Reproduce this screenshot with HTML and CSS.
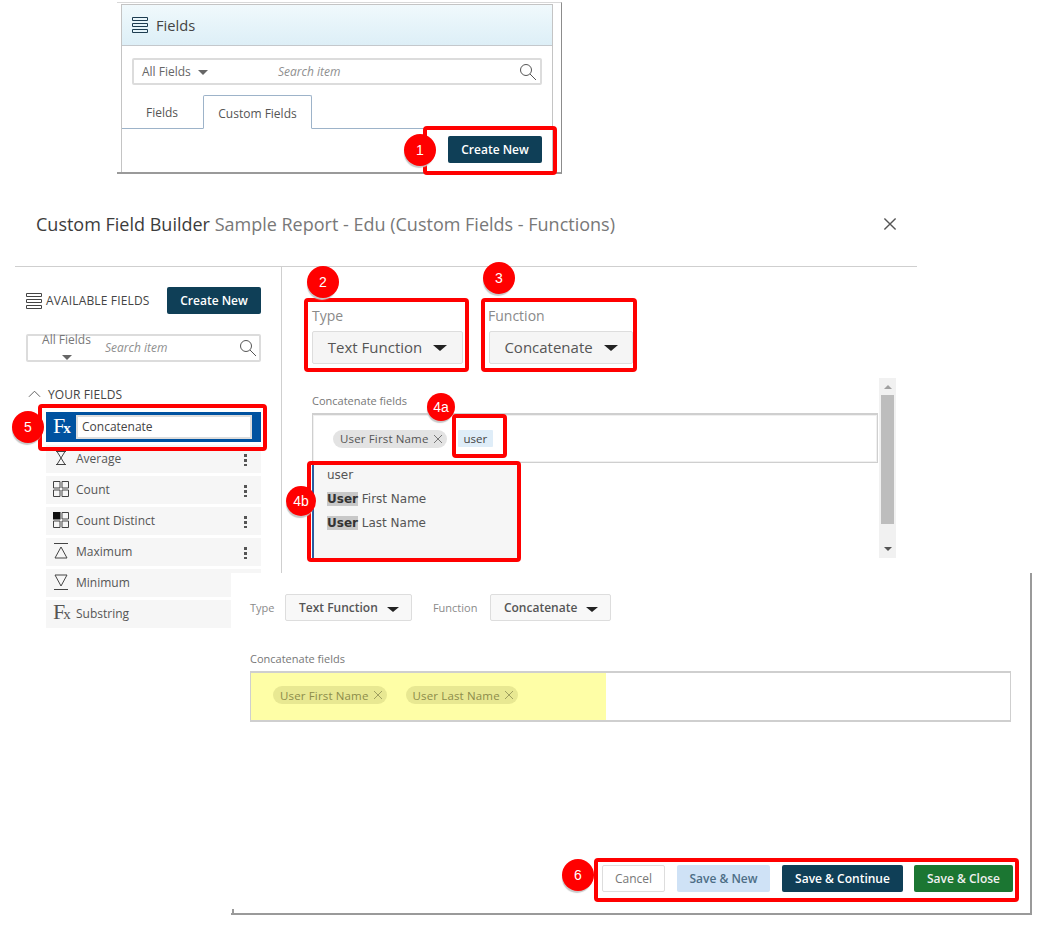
FILE: index.html
```html
<!DOCTYPE html>
<html lang="en">
<head>
<meta charset="utf-8">
<title>Custom Field Builder</title>
<link rel="stylesheet" href="styles.css">
</head>
<body>
<svg class="defs" width="0" height="0" aria-hidden="true">
  <symbol id="i-list" viewBox="0 0 16 16"><path d="M.5.5h15v3H.5zM.5 6.5h15v3H.5zM.5 12.5h15v3H.5z" fill="none" stroke="currentColor"/></symbol>
  <symbol id="i-search" viewBox="0 0 18 18"><circle cx="7" cy="7" r="5.500" fill="none" stroke="currentColor"/><path d="M11 11l6 6" stroke="currentColor" fill="none"/></symbol>
  <symbol id="i-x" viewBox="0 0 10 10"><path d="M1 1l8 8M9 1l-8 8" stroke="currentColor" fill="none"/></symbol>
</svg>

<section class="win fields-win">
  <div class="fields-panel">
    <header class="fields-head">
      <svg class="head-icon"><use href="#i-list"/></svg>
      <span>Fields</span>
    </header>
    <div class="search-row">
      <span class="all-fields">All Fields <i class="caret caret-grey"></i></span>
      <span class="search-hint">Search item</span>
      <svg class="search-icon"><use href="#i-search"/></svg>
    </div>
    <nav class="tabs">
      <span class="tab">Fields</span>
      <span class="tab tab-on">Custom Fields</span>
    </nav>
    <div class="create-row"><button class="btn btn-navy btn-create">Create New</button></div>
  </div>
</section>

<section class="win builder-win">
  <header class="builder-head">
    <h1 class="builder-title">Custom Field Builder <span>Sample Report - Edu (Custom Fields - Functions)</span></h1>
    <svg class="close-icon"><use href="#i-x"/></svg>
  </header>
  <div class="builder-body">
    <aside class="sidebar">
      <div class="side-top">
        <svg class="side-list"><use href="#i-list"/></svg>
        <span class="side-title">AVAILABLE FIELDS</span>
        <button class="btn btn-navy btn-side">Create New</button>
      </div>
      <div class="side-search">
        <span class="side-all">All Fields<i class="caret caret-grey"></i></span>
        <span class="search-hint">Search item</span>
        <svg class="search-icon"><use href="#i-search"/></svg>
      </div>
      <div class="your-fields">
        <svg class="chev" viewBox="0 0 14 8"><path d="M1 7l6-6 6 6" fill="none" stroke="currentColor"/></svg>
        <span>YOUR FIELDS</span>
      </div>
      <div class="field-active">
        <span class="fx fx-white">F<small>x</small></span>
        <span class="field-input">Concatenate</span>
      </div>
      <ul class="field-list">
        <li class="field">
          <svg class="field-icon" viewBox="0 0 16 16"><path d="M3 1.500h10M3 14.500h10M4 1.500l8 13M12 1.500l-8 13" fill="none" stroke="currentColor"/></svg>
          <span class="field-name">Average</span><i class="dots"></i>
        </li>
        <li class="field">
          <svg class="field-icon" viewBox="0 0 16 16"><path d="M.5.5h6.500v6.500H.5zM9 .5h6.500v6.500H9zM.5 9h6.500v6.500H.5zM9 9h6.500v6.500H9z" fill="none" stroke="currentColor"/></svg>
          <span class="field-name">Count</span><i class="dots"></i>
        </li>
        <li class="field">
          <svg class="field-icon" viewBox="0 0 16 16"><path d="M0 0h7.500v7.500H0z" fill="#111"/><path d="M9 .5h6.500v6.500H9zM.5 9h6.500v6.500H.5zM9 9h6.500v6.500H9z" fill="none" stroke="currentColor"/></svg>
          <span class="field-name">Count Distinct</span><i class="dots"></i>
        </li>
        <li class="field">
          <svg class="field-icon" viewBox="0 0 16 16"><path d="M1 .5h14M8 4l6 11H2z" fill="none" stroke="currentColor"/></svg>
          <span class="field-name">Maximum</span><i class="dots"></i>
        </li>
        <li class="field">
          <svg class="field-icon" viewBox="0 0 16 16"><path d="M1 15.500h14M8 12L2 1h12z" fill="none" stroke="currentColor"/></svg>
          <span class="field-name">Minimum</span>
        </li>
        <li class="field">
          <span class="fx">F<small>x</small></span>
          <span class="field-name">Substring</span>
        </li>
      </ul>
    </aside>
    <div class="main">
      <div class="selects">
        <div class="select-group select-type">
          <label class="select-label">Type</label>
          <div class="select-box">Text Function <i class="caret caret-big"></i></div>
        </div>
        <div class="select-group select-function">
          <label class="select-label">Function</label>
          <div class="select-box">Concatenate <i class="caret caret-big"></i></div>
        </div>
      </div>
      <div class="concat">
        <div class="concat-col">
          <label class="concat-label">Concatenate fields</label>
          <div class="concat-box">
            <span class="chip">User First Name <svg class="chip-x"><use href="#i-x"/></svg></span>
            <span class="typed">user</span>
          </div>
          <div class="suggest">
            <div class="suggest-row suggest-first">user</div>
            <div class="suggest-row"><b>User</b> First Name</div>
            <div class="suggest-row"><b>User</b> Last Name</div>
          </div>
        </div>
        <div class="scrollbar">
          <i class="sb-up"></i>
          <i class="sb-thumb"></i>
          <i class="sb-down"></i>
        </div>
      </div>
    </div>
  </div>
</section>

<section class="win final-win">
  <div class="final-selects">
    <label class="final-label">Type</label>
    <div class="final-box">Text Function <i class="caret caret-mid"></i></div>
    <label class="final-label final-label-fn">Function</label>
    <div class="final-box">Concatenate <i class="caret caret-mid"></i></div>
  </div>
  <label class="final-concat-label">Concatenate fields</label>
  <div class="final-concat">
    <div class="highlight">
      <span class="chip chip-hl">User First Name <svg class="chip-x"><use href="#i-x"/></svg></span>
      <span class="chip chip-hl">User Last Name <svg class="chip-x"><use href="#i-x"/></svg></span>
    </div>
  </div>
  <footer class="actions">
    <button class="btn btn-cancel">Cancel</button>
    <button class="btn btn-light">Save &amp; New</button>
    <button class="btn btn-navy btn-cont">Save &amp; Continue</button>
    <button class="btn btn-green">Save &amp; Close</button>
  </footer>
</section>

<i class="box box-1"></i>
<i class="box box-2"></i>
<i class="box box-3"></i>
<i class="box box-4a"></i>
<i class="box box-4b"></i>
<i class="box box-5"></i>
<i class="box box-6"></i>
<span class="marker m-1">1</span>
<span class="marker m-2">2</span>
<span class="marker m-3">3</span>
<span class="marker m-4a">4a</span>
<span class="marker m-4b">4b</span>
<span class="marker m-5">5</span>
<span class="marker m-6">6</span>
</body>
</html>
```
FILE: styles.css
```css
* { box-sizing: border-box; }
html, body { margin: 0; padding: 0; }
body {
  position: relative;
  width: 1043px;
  height: 927px;
  overflow: hidden;
  background: #fff;
  font-family: "Open Sans", "Noto Sans", sans-serif;
  color: #555;
}
.defs { position: absolute; }
i { display: block; font-style: normal; }
button { font-family: inherit; margin: 0; }

.win { position: absolute; }

/* shared */
.btn {
  border: 0;
  border-radius: 2px;
  font-size: 12px;
  font-weight: 600;
  padding: 0;
  display: block;
}
.btn-navy { background: #0f3f57; color: #fff; }
.caret {
  display: inline-block;
  width: 0; height: 0;
  border-style: solid;
  border-color: #222 transparent transparent;
}
.caret-grey { border-width: 5px 5px 0; border-top-color: #666; }
.caret-big { border-width: 6px 7px 0; margin-left: 7px; vertical-align: 2px; }
.caret-mid { border-width: 5px 6px 0; margin-left: 6px; vertical-align: 0; }
.search-hint { font-size: 12px; font-style: italic; color: #8f8f8f; }
.search-icon { width: 18px; height: 18px; color: #555; }

/* first window */
.fields-win {
  left: 117px; top: 2px; width: 445px; height: 172px;
  border-right: 1px solid #8c8c8c;
  border-bottom: 2px solid #9a9a9a;
  border-top: 1px solid #d8d8d8;
  padding: 1px 8px 0 4px;
}
.fields-panel {
  height: 100%;
  border-left: 1px solid #c4c4c4;
  border-right: 1px solid #c4c4c4;
  border-top: 1px solid #c4c4c4;
  display: flex;
  flex-direction: column;
}
.fields-head {
  height: 41px;
  flex: none;
  display: flex;
  align-items: center;
  gap: 8px;
  padding-left: 10px;
  background: linear-gradient(#f0f9fc, #ddeff7);
  border-bottom: 1px solid #c4c8cc;
  font-size: 14.700px;
  color: #444;
}
.head-icon { width: 16px; height: 16px; color: #1d3c50; }
.search-row {
  margin: 12px 10px 0 10px;
  height: 27px;
  flex: none;
  border: 2px solid #dcdcdc;
  border-radius: 2px;
  display: flex;
  align-items: center;
  padding: 0 3px 0 8px;
  font-size: 12px;
  color: #666;
}
.all-fields { width: 136px; }
.all-fields .caret { margin-left: 4px; vertical-align: 1px; }
.search-row .search-icon { margin-left: auto; }
.tabs {
  margin-top: 10px;
  height: 34px;
  flex: none;
  display: flex;
  border-bottom: 1px solid #9db3c9;
  font-size: 12px;
  color: #555;
}
.tab { padding: 9px 24px 0; width: 81px; }
.tab-on {
  width: 109px;
  padding: 9px 0 0;
  text-align: center;
  height: 34px;
  background: #fff;
  border: 1px solid #9db3c9;
  border-bottom: 1px solid #fff;
  border-radius: 2px 2px 0 0;
}
.create-row { display: flex; justify-content: flex-end; padding: 7px 10px 0 0; }
.btn-create { width: 94px; height: 27px; }

/* builder */
.builder-win { left: 15px; top: 196px; width: 902px; height: 440px; }
.builder-head {
  height: 71px;
  border-bottom: 1px solid #cfcfcf;
  display: flex;
  justify-content: space-between;
  padding: 16px 20px 0 21px;
}
.builder-title { margin: 0; font-size: 18px; font-weight: 400; color: #3c3c3c; line-height: 24px; }
.builder-title span { color: #787878; }
.close-icon { width: 14px; height: 14px; margin-top: 5px; color: #555; }
.builder-body { display: flex; height: 369px; }
.sidebar { width: 266px; flex: none; padding: 20px 0 0 11px; }
.side-top { display: flex; align-items: center; height: 27px; padding-right: 20px; }
.side-list { width: 16px; height: 16px; color: #444; flex: none; }
.side-title { font-size: 12px; margin-left: 4px; color: #444; flex: 1; white-space: nowrap; letter-spacing: .15px; }
.btn-side { width: 94px; height: 27px; flex: none; }
.side-search {
  margin-top: 20px;
  width: 235px;
  height: 28px;
  border: 2px solid #dcdcdc;
  border-radius: 2px;
  display: flex;
  align-items: center;
  padding-right: 2px;
}
.side-all {
  width: 77px;
  text-align: center;
  font-size: 12px;
  color: #777;
  line-height: 13px;
  margin-top: -4px;
  flex: none;
}
.side-all .caret { display: block; margin: 9px auto 0; }
.side-search .search-hint { margin-top: -2px; }
.side-search .search-icon { margin-left: auto; }
.your-fields {
  display: flex;
  align-items: center;
  gap: 7px;
  margin-top: 24px;
  padding-left: 2px;
  font-size: 12px;
  letter-spacing: .1px;
  color: #444;
  height: 16px;
}
.chev { width: 13px; height: 8px; color: #555; }
.field-active {
  margin: 10px 20px 0 20px;
  height: 30px;
  background: #0052a0;
  display: flex;
  align-items: center;
  padding: 0 9px 0 7px;
  gap: 7px;
}
.fx { font-family: "Liberation Serif", serif; font-size: 22px; line-height: 20px; color: #555; width: 16px; flex: none; letter-spacing: -2px; }
.fx small { font-size: 15px; font-weight: 400; }
.fx-white { color: #fff; }
.fx-white small { font-weight: 700; }
.field-input {
  flex: 1;
  height: 24px;
  background: #fff;
  border: 2px solid #ddd;
  padding-left: 4px;
  font-size: 12px;
  line-height: 20px;
  color: #444;
}
.field-list { list-style: none; margin: 3px 20px 0 20px; padding: 0; }
.field {
  height: 28px;
  margin-bottom: 3px;
  background: #f6f6f6;
  display: flex;
  align-items: center;
  padding: 0 14px 2px 7px;
  gap: 7px;
  font-size: 12px;
  color: #555;
}
.field-icon { width: 16px; height: 16px; color: #444; flex: none; }
.field-name { flex: 1; }
.dots {
  width: 3px; height: 13px;
  margin-top: 2px;
  background: radial-gradient(circle, #555 0 1.5px, transparent 1.6px) 0 0 / 3px 5px repeat-y;
}
.main {
  flex: 1;
  border-left: 1px solid #cfcfcf;
  padding: 39px 0 0 30px;
  height: 306px;
}
.selects { display: flex; gap: 26px; }
.select-group { display: flex; flex-direction: column; }
.select-type { width: 151px; }
.select-function { width: 144px; }
.select-label { font-size: 14px; line-height: 19px; color: #8a8a8a; margin-bottom: 6px; }
.select-function .select-label { margin-left: -1px; }
.select-box {
  height: 33px;
  background: #f5f5f5;
  border: 1px solid #ddd;
  border-radius: 2px;
  font-size: 15px;
  line-height: 30px;
  color: #555;
  text-align: center;
}
.concat { display: flex; margin-top: 14px; height: 180px; }
.concat-col { width: 567px; padding-top: 16px; }
.concat-label { display: block; font-size: 11px; line-height: 14px; color: #777; }
.concat-box {
  margin-top: 5px;
  width: 566px;
  height: 50px;
  border: 1px solid #cfcfcf;
  border-top-width: 2px;
  box-shadow: inset 0 0 0 1px #f0f0f0;
  display: flex;
  align-items: center;
  padding-left: 20px;
}
.chip {
  display: flex;
  align-items: center;
  gap: 4px;
  height: 18px;
  padding: 0 4px 0 7px;
  background: #e3e3e3;
  border-radius: 9px;
  font-size: 11.500px;
  color: #555;
  white-space: nowrap;
  letter-spacing: .15px;
}
.chip-x { width: 10px; height: 10px; color: #777; }
.typed {
  margin-left: 11px;
  background: #dfedf8;
  height: 17px;
  padding: 0 6px;
  font-size: 11.500px;
  line-height: 18px;
  color: #444;
  border-radius: 1px;
}
.suggest {
  width: 206px;
  height: 96px;
  background: #f6f6f6;
  border-left: 2px solid #2b5a9e;
  padding: 2px 0 0 13px;
  font-family: "DejaVu Sans", sans-serif;
  font-size: 12px;
  color: #555;
}
.suggest-row { height: 24px; line-height: 20px; }
.suggest-row b { background: #c8c8c8; color: #333; }
.scrollbar {
  width: 17px;
  height: 180px;
  background: #f1f1f1;
  display: flex;
  flex-direction: column;
  align-items: center;
  padding-top: 7px;
}
.sb-up { width: 0; height: 0; border: solid transparent; border-width: 0 4px 4px; border-bottom-color: #a0a0a0; }
.sb-thumb { width: 13px; height: 129px; margin-top: 6px; background: #bdbdbd; }
.sb-down { width: 0; height: 0; margin-top: 23px; border: solid transparent; border-width: 4px 4px 0; border-top-color: #555; }

/* final window */
.final-win {
  left: 231px; top: 573px; width: 801px; height: 342px;
  background: #fff;
  border-right: 2px solid #9a9a9a;
  border-bottom: 2px solid #9a9a9a;
  padding: 21px 0 0 19px;
}
.final-win::before {
  content: "";
  position: absolute;
  left: 1px; bottom: 0; width: 2px; height: 4px;
  background: #9a9a9a;
}
.final-selects { display: flex; align-items: center; height: 27px; }
.final-label { font-size: 11px; color: #8a8a8a; width: 35px; flex: none; }
.final-label-fn { width: 57px; margin-left: 21px; }
.final-box {
  height: 27px;
  padding: 0 12px 0 13px;
  border: 1px solid #ddd;
  border-radius: 2px;
  background: #f8f8f8;
  font-size: 12px;
  font-weight: 600;
  line-height: 25px;
  color: #555;
  white-space: nowrap;
}
.final-concat-label { display: block; margin-top: 31px; font-size: 11px; line-height: 14px; color: #777; }
.final-concat {
  margin-top: 5px;
  width: 761px;
  height: 51px;
  border: 1px solid #cfcfcf;
  border-top-width: 2px;
  border-bottom-width: 2px;
}
.highlight {
  width: 355px;
  height: 100%;
  background: #fefea6;
  display: flex;
  align-items: center;
  gap: 19px;
  padding-left: 22px;
  padding-bottom: 3px;
}
.chip-hl { background: #e8e892; color: #8c8c4a; }
.chip-hl .chip-x { color: #a0a060; }
.actions {
  display: flex;
  align-items: center;
  margin: 143px 0 0 352px;
  height: 27px;
}
.actions .btn { height: 27px; }
.btn-cancel { width: 63px; background: #fff; border: 1px solid #ddd; color: #777; font-weight: 400; }
.btn-light { width: 93px; margin-left: 12px; background: #cfe2f6; color: #4d6e86; }
.btn-cont { width: 121px; margin-left: 12px; }
.btn-green { width: 99px; margin-left: 11px; background: #1b7632; color: #f0f0f0; }

/* annotations */
.box {
  position: absolute;
  border: 4px solid #f00;
  border-radius: 4px;
  pointer-events: none;
}
.box-1 { left: 423px; top: 126px; width: 134px; height: 49px; }
.box-2 { left: 304px; top: 298px; width: 165px; height: 74px; }
.box-3 { left: 481px; top: 298px; width: 156px; height: 74px; }
.box-4a { left: 452px; top: 414px; width: 55px; height: 44px; }
.box-4b { left: 307px; top: 461px; width: 214px; height: 101px; }
.box-5 { left: 38px; top: 404px; width: 229px; height: 47px; }
.box-6 { left: 594px; top: 858px; width: 425px; height: 44px; }
.marker {
  position: absolute;
  width: 32px; height: 32px;
  border-radius: 50%;
  background: #f00;
  color: #fff;
  font-family: "Liberation Sans", Arial, sans-serif;
  font-size: 14px;
  line-height: 32px;
  text-align: center;
  box-shadow: -1px 3px 1px -1px #c8c8c8;
}
.m-1 { left: 404px; top: 134px; }
.m-2 { left: 307px; top: 266px; }
.m-3 { left: 483px; top: 262px; }
.m-4a { left: 427px; top: 393px; width: 28px; height: 28px; line-height: 28px; }
.m-4b { left: 286px; top: 486px; width: 30px; height: 30px; line-height: 30px; }
.m-5 { left: 12px; top: 411px; }
.m-6 { left: 562px; top: 859px; }
```
